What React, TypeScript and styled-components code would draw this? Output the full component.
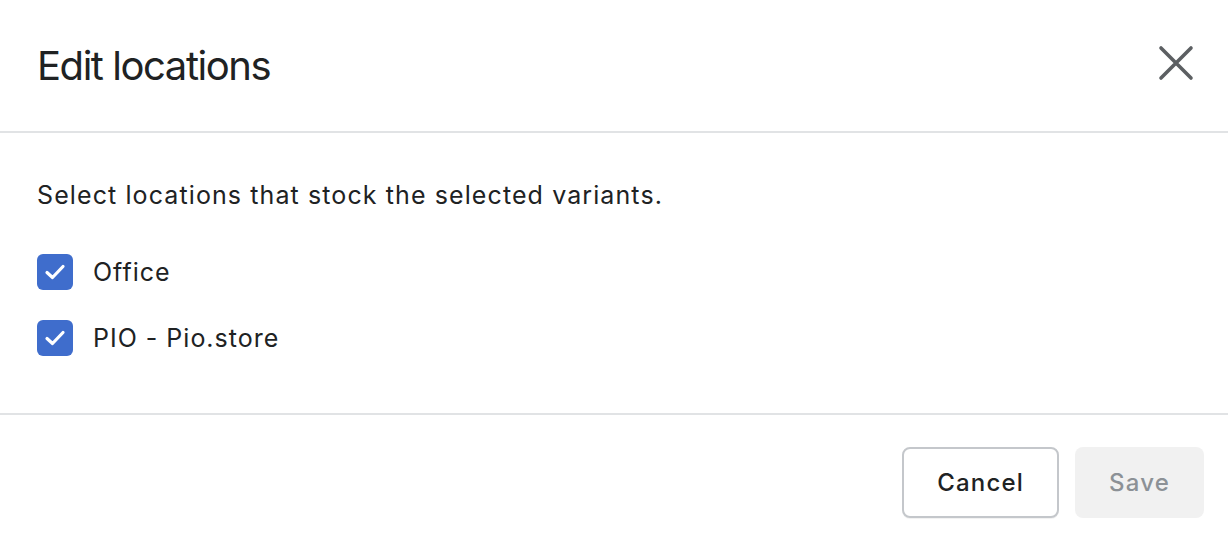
import styled, { createGlobalStyle } from "styled-components";

const GlobalStyle = createGlobalStyle`
  html, body {
    margin: 0;
    padding: 0;
    background: #ffffff;
  }

  body {
    font-family: Inter, "Noto Sans", sans-serif;
    color: #202223;
  }
`;

const Dialog = styled.div`
  width: 1228px;
  height: 544px;
  display: flex;
  flex-direction: column;
  background: #ffffff;
`;

const Header = styled.div`
  display: flex;
  align-items: center;
  height: 133px;
  padding: 0 34px 0 37px;
  border-bottom: 2px solid #e1e3e5;
  box-sizing: border-box;
  flex-shrink: 0;
`;

const Title = styled.h2`
  margin: 0;
  font-size: 40px;
  font-weight: 400;
  letter-spacing: -1.45px;
  color: #202223;
`;

const CloseButton = styled.button`
  margin-left: auto;
  margin-bottom: 6px;
  display: flex;
  align-items: center;
  justify-content: center;
  padding: 0;
  border: none;
  background: none;
  color: #5c5f62;
  cursor: pointer;
`;

const Body = styled.div`
  flex: 1;
  padding: 46px 37px 0;
  border-bottom: 2px solid #e1e3e5;
`;

const Intro = styled.p`
  margin: 0 0 43px;
  font-size: 25px;
  line-height: 32px;
  letter-spacing: 1.1px;
`;

const List = styled.div`
  display: flex;
  flex-direction: column;
  gap: 30px;
`;

const Row = styled.label`
  display: flex;
  align-items: center;
  gap: 20px;
  font-size: 25px;
  line-height: 36px;
  letter-spacing: 1px;
  cursor: pointer;
`;

const Box = styled.span<{ $checked: boolean }>`
  width: 36px;
  height: 36px;
  border-radius: 6px;
  display: flex;
  align-items: center;
  justify-content: center;
  background: ${(p) => (p.$checked ? "#3f6dcc" : "#ffffff")};
  border: ${(p) => (p.$checked ? "none" : "2px solid #8c9196")};
  box-sizing: border-box;
`;

const Footer = styled.div`
  height: 129px;
  display: flex;
  justify-content: flex-end;
  align-items: flex-start;
  gap: 16px;
  padding: 32px 24px 0;
  box-sizing: border-box;
  flex-shrink: 0;
`;

const Button = styled.button<{ $disabled?: boolean }>`
  height: 71px;
  padding: 0 ${(p) => (p.$disabled ? "34px" : "33px")};
  font-family: Inter, "Noto Sans", sans-serif;
  font-size: 24px;
  font-weight: 500;
  letter-spacing: 1.2px;
  border-radius: 8px;
  box-sizing: border-box;
  cursor: ${(p) => (p.$disabled ? "default" : "pointer")};
  color: ${(p) => (p.$disabled ? "#8c9196" : "#202223")};
  background: ${(p) => (p.$disabled ? "#f1f1f1" : "#ffffff")};
  border: ${(p) => (p.$disabled ? "none" : "2px solid #c4c7cb")};
  box-shadow: ${(p) => (p.$disabled ? "none" : "0 1px 0 rgba(0, 0, 0, 0.05)")};
`;

const locations = [
  { id: "office", name: "Office", checked: true },
  { id: "pio", name: "PIO - Pio.store", checked: true },
];

const App = () => {
  return (
    <>
      <GlobalStyle />
      <Dialog>
        <Header>
          <Title>Edit locations</Title>
          <CloseButton aria-label="Close">
            <svg width="36" height="36" viewBox="0 0 36 36">
              <path
                d="M3 3 L33 33 M33 3 L3 33"
                stroke="currentColor"
                strokeWidth="3.6"
                strokeLinecap="round"
              />
            </svg>
          </CloseButton>
        </Header>
        <Body>
          <Intro>Select locations that stock the selected variants.</Intro>
          <List>
            {locations.map((loc) => (
              <Row key={loc.id}>
                <Box $checked={loc.checked}>
                  {loc.checked && (
                    <svg width="22" height="18" viewBox="0 0 22 18">
                      <path
                        d="M3 9.5 L8.5 14.5 L19 3.5"
                        fill="none"
                        stroke="#ffffff"
                        strokeWidth="3.2"
                        strokeLinecap="round"
                        strokeLinejoin="round"
                      />
                    </svg>
                  )}
                </Box>
                {loc.name}
              </Row>
            ))}
          </List>
        </Body>
        <Footer>
          <Button>Cancel</Button>
          <Button $disabled>Save</Button>
        </Footer>
      </Dialog>
    </>
  );
};

export default App;
